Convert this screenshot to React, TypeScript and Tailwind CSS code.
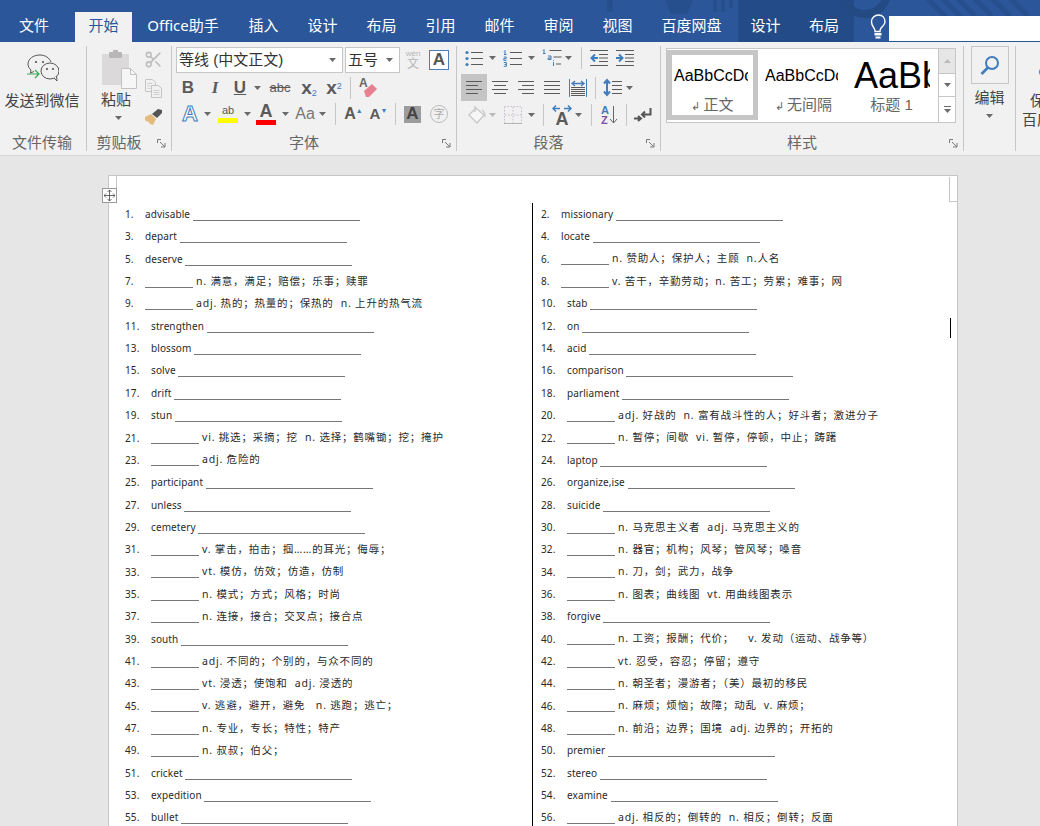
import React from 'react'
import { Scissors } from 'lucide-react'

const cjk = "font-['Noto_Sans','Noto_Sans_CJK_SC',sans-serif]"
const ui = "font-['Liberation_Sans','Noto_Sans_CJK_SC',sans-serif]"

type Row = { n: number; word?: string; def?: string }

const leftRows: Row[] = [
  { n: 1, word: 'advisable' },
  { n: 3, word: 'depart' },
  { n: 5, word: 'deserve' },
  { n: 7, def: 'n. 满意，满足；赔偿；乐事；赎罪' },
  { n: 9, def: 'adj. 热的；热量的；保热的  n. 上升的热气流' },
  { n: 11, word: 'strengthen' },
  { n: 13, word: 'blossom' },
  { n: 15, word: 'solve' },
  { n: 17, word: 'drift' },
  { n: 19, word: 'stun' },
  { n: 21, def: 'vi. 挑选；采摘；挖  n. 选择；鹤嘴锄；挖；掩护' },
  { n: 23, def: 'adj. 危险的' },
  { n: 25, word: 'participant' },
  { n: 27, word: 'unless' },
  { n: 29, word: 'cemetery' },
  { n: 31, def: 'v. 掌击，拍击；掴……的耳光；侮辱；' },
  { n: 33, def: 'vt. 模仿，仿效；仿造，仿制' },
  { n: 35, def: 'n. 模式；方式；风格；时尚' },
  { n: 37, def: 'n. 连接，接合；交叉点；接合点' },
  { n: 39, word: 'south' },
  { n: 41, def: 'adj. 不同的；个别的，与众不同的' },
  { n: 43, def: 'vt. 浸透；使饱和  adj. 浸透的' },
  { n: 45, def: 'v. 逃避，避开，避免   n. 逃跑；逃亡；' },
  { n: 47, def: 'n. 专业，专长；特性；特产' },
  { n: 49, def: 'n. 叔叔；伯父；' },
  { n: 51, word: 'cricket' },
  { n: 53, word: 'expedition' },
  { n: 55, word: 'bullet' },
]

const rightRows: Row[] = [
  { n: 2, word: 'missionary' },
  { n: 4, word: 'locate' },
  { n: 6, def: 'n. 赞助人；保护人；主顾  n.人名' },
  { n: 8, def: 'v. 苦干，辛勤劳动；n. 苦工；劳累；难事；网' },
  { n: 10, word: 'stab' },
  { n: 12, word: 'on' },
  { n: 14, word: 'acid' },
  { n: 16, word: 'comparison' },
  { n: 18, word: 'parliament' },
  { n: 20, def: 'adj. 好战的  n. 富有战斗性的人；好斗者；激进分子' },
  { n: 22, def: 'n. 暂停；间歇  vi. 暂停，停顿，中止；踌躇' },
  { n: 24, word: 'laptop' },
  { n: 26, word: 'organize,ise' },
  { n: 28, word: 'suicide' },
  { n: 30, def: 'n. 马克思主义者  adj. 马克思主义的' },
  { n: 32, def: 'n. 器官；机构；风琴；管风琴；嗓音' },
  { n: 34, def: 'n. 刀，剑；武力，战争' },
  { n: 36, def: 'n. 图表；曲线图  vt. 用曲线图表示' },
  { n: 38, word: 'forgive' },
  { n: 40, def: 'n. 工资；报酬；代价；    v. 发动（运动、战争等）' },
  { n: 42, def: 'vt. 忍受，容忍；停留；遵守' },
  { n: 44, def: 'n. 朝圣者；漫游者；（美）最初的移民' },
  { n: 46, def: 'n. 麻烦；烦恼；故障；动乱  v. 麻烦；' },
  { n: 48, def: 'n. 前沿；边界；国境  adj. 边界的；开拓的' },
  { n: 50, word: 'premier' },
  { n: 52, word: 'stereo' },
  { n: 54, word: 'examine' },
  { n: 56, def: 'adj. 相反的；倒转的  n. 相反；倒转；反面' },
]

const Caret = ({ className = '' }: { className?: string }) => (
  <svg width="7" height="4" viewBox="0 0 7 4" className={`shrink-0 ${className}`}>
    <path d="M0 0h7L3.5 4z" fill="#6a6a6a" />
  </svg>
)

const Launcher = () => (
  <svg width="9" height="9" viewBox="0 0 9 9" className="absolute right-[5px] bottom-[3px]">
    <path d="M.5 4V.5H4" fill="none" stroke="#777" />
    <path d="M3 3l4.500 4.500M8 4v4H4" fill="none" stroke="#777" />
  </svg>
)

const Sep = () => <div className="w-px h-[22px] bg-[#c6c6c6] shrink-0" />

const Group = ({
  width,
  label,
  launcher,
  children,
}: {
  width: string
  label?: string
  launcher?: boolean
  children: React.ReactNode
}) => (
  <div className={`${width} relative shrink-0 h-[105px] flex flex-col border-r border-[#c6c6c6]`}>
    <div className="flex-1 min-h-0">{children}</div>
    {label && (
      <div
        className={`h-[17px] leading-[17px] text-center text-[15px] text-[#666] whitespace-nowrap ${
          launcher ? 'pr-[20px]' : 'pr-[2px]'
        }`}
      >
        {label}
      </div>
    )}
    {launcher && <Launcher />}
  </div>
)

const ListIcon = ({ kind }: { kind: 'bullet' | 'number' }) => (
  <svg width="20" height="17" viewBox="0 0 20 17" className="shrink-0">
    {kind === 'bullet' && (
      <g fill="#3f7dbd">
        <circle cx="2" cy="2.500" r="1.600" />
        <circle cx="2" cy="8.500" r="1.600" />
        <circle cx="2" cy="14.500" r="1.600" />
      </g>
    )}
    {kind === 'number' && (
      <g fill="none" stroke="#3f7dbd" strokeWidth="1">
        <path d="M1 1.500l1-1v4M1 4.500h2.500" />
        <path d="M.8 7h2.400v1.600H.8v1.800h2.700" />
        <path d="M.8 12.500h2.600v3.800H.8M1.500 14.400h1.700" />
      </g>
    )}
    <path d={kind === 'bullet' ? 'M6 2.500h12M6 8.500h12M6 14.500h12' : 'M7 2.500h12M7 8.500h12M7 14.500h12'} stroke="#5a5a5a" />
  </svg>
)

const MultiIcon = () => (
  <svg width="21" height="18" viewBox="0 0 21 18" className="shrink-0">
    <g fill="none" stroke="#3f7dbd">
      <path d="M1 1.500l1-1v4M1 4.500h2.500" />
      <path d="M6 7h3v3.500H6V9h3" />
      <path d="M11.500 13v4M11.500 11v.8" />
    </g>
    <path d="M7.500 1.500h12M11.500 8h8M14 15h5" stroke="#5a5a5a" />
  </svg>
)

const IndentIcon = ({ out }: { out?: boolean }) => (
  <svg width="18" height="16" viewBox="0 0 18 16" className="shrink-0">
    <path d="M0 .5h18M9 4.500h9M9 8h9M9 11.500h9M0 15.500h18" stroke="#5a5a5a" />
    {out ? (
      <path d="M8 8H2M5 4.500L1.500 8 5 11.500" fill="none" stroke="#3f7dbd" strokeWidth="2" />
    ) : (
      <path d="M0 8h6M3 4.500L6.500 8 3 11.500" fill="none" stroke="#3f7dbd" strokeWidth="2" />
    )}
  </svg>
)

const AlignIcon = ({ lines }: { lines: string }) => (
  <svg width="16" height="13" viewBox="0 0 16 13">
    <path d={lines} stroke="#5a5a5a" />
  </svg>
)

const Distributed = () => (
  <svg width="18" height="18" viewBox="0 0 18 18" className="shrink-0">
    <path d="M.5 0v18M17.500 0v18" stroke="#3f7dbd" />
    <path d="M3 4.500h12M6 2L3 4.500 6 7M12 2l3 2.500L12 7" fill="none" stroke="#3f7dbd" strokeWidth="1.300" />
    <path d="M2 8.500h14M2 10.500h14M2 12.500h14M2 14.500h14M2 16.500h14" stroke="#5a5a5a" />
  </svg>
)

const LineSpacing = () => (
  <svg width="19" height="19" viewBox="0 0 19 19" className="shrink-0">
    <path d="M4 3v13M1 5.500L4 2l3 3.500M1 13.500L4 17l3-3.500" fill="none" stroke="#3f7dbd" strokeWidth="2" />
    <path d="M9 3.500h10M9 7.500h10M9 11.500h10M9 15.500h10" stroke="#5a5a5a" />
  </svg>
)

const Painter = () => (
  <svg width="19" height="17" viewBox="0 0 19 17">
    <path d="M1 9l6-3 5 5-3 6-3-1-2-3-1 1-2-2z" fill="#e4bb7d" />
    <path d="M8 6l6-5 4 1v3l-5 5z" fill="#555" />
  </svg>
)

const CopyIcon = () => (
  <svg width="18" height="19" viewBox="0 0 18 19">
    <path d="M.5.500h7l3 3v9H.5z" fill="#f1f1f1" stroke="#c4c4c4" />
    <path d="M6.500 6.500h7l3 3v9h-10z" fill="#f1f1f1" stroke="#c4c4c4" />
    <path d="M2.500 4.500h5M2.500 7h3M2.500 9.500h3M8.500 11.500h6M8.500 13.500h6M8.500 15.500h6" stroke="#cfcfcf" />
  </svg>
)

const PasteIcon = () => (
  <svg width="35" height="39" viewBox="0 0 35 39">
    <rect x="0" y="4" width="27" height="31" rx="1" fill="#dcd9da" />
    <rect x="7" y="2" width="13" height="6" rx="1" fill="#b9b6b7" />
    <rect x="11" y="0" width="5" height="3" fill="#b9b6b7" />
    <path d="M19.500 18.500h9l6 6v14h-15z" fill="#f7f6f6" stroke="#c4c1c2" />
    <path d="M28.500 18.500v6h6" fill="none" stroke="#c4c1c2" />
  </svg>
)

const WechatIcon = () => (
  <svg width="33" height="28" viewBox="0 0 33 28">
    <path d="M14 1C7 1 2 5 2 10c0 2.500 1.300 4.600 3 6l-.5 3 3.500-1.500" fill="none" stroke="#555" />
    <path d="M25 8C23.500 3.800 19 1 14 1" fill="none" stroke="#555" />
    <ellipse cx="24" cy="17" rx="9" ry="8" fill="#f1f1f1" stroke="#555" />
    <path d="M28 24l3 3-.5-5" fill="#f1f1f1" stroke="#555" />
    <circle cx="10" cy="8" r="1.100" fill="#555" />
    <circle cx="17" cy="8" r="1.100" fill="#555" />
    <circle cx="21" cy="15" r="1.100" fill="#555" />
    <circle cx="27" cy="15" r="1.100" fill="#555" />
    <path d="M1 20h12M9 16l4 4-4 4" fill="none" stroke="#3aa655" strokeWidth="1.200" />
  </svg>
)

const Eraser = () => (
  <svg width="18" height="22" viewBox="0 0 18 22">
    <path d="M5 14l8-7 5 5-8 8h-3z" fill="#e8808f" />
    <text x="0" y="10" fontSize="12" fontWeight="700" fill="#666" fontFamily="Liberation Sans">A</text>
  </svg>
)

const Bucket = () => (
  <svg width="20" height="20" viewBox="0 0 20 20" className="shrink-0">
    <path d="M9 3l8 7-7 8-8-8z" fill="#f7f7f7" stroke="#c9c9c9" strokeWidth="1.400" />
    <path d="M8 1v6M15 5c3 2 3 4 3 7" fill="none" stroke="#c9c9c9" strokeWidth="1.400" />
  </svg>
)

const Borders = () => (
  <svg width="18" height="18" viewBox="0 0 18 18" className="shrink-0">
    <rect x=".5" y=".5" width="17" height="17" fill="none" stroke="#c9b9cf" strokeDasharray="1.500 1.500" />
    <path d="M9 1v16M1 9h16" stroke="#c9b9cf" strokeDasharray="1.500 1.500" />
    <path d="M0 17.500h18" stroke="#b4b4b4" />
  </svg>
)

const Pilcrow = () => (
  <svg width="18" height="16" viewBox="0 0 18 16" className="shrink-0">
    <path d="M16.500 1v6.500H8M11 4.500L8 7.500l3 3" fill="none" stroke="#555" strokeWidth="2" />
    <path d="M0 11.500h6M4 9l3 2.500L4 14" fill="none" stroke="#555" strokeWidth="2" />
  </svg>
)

const Bulb = () => (
  <svg width="16" height="28" viewBox="0 0 16 28">
    <path d="M8 2C4 2 1 5 1 9c0 3 2 5 3 7 .4.900.500 1.500.500 2.500h5c0-1 .100-1.600.500-2.500 1-2 4.500-4 4.500-7 0-4-2.500-7-6.500-7z" fill="none" stroke="#fff" strokeWidth="1.400" transform="translate(.5 0)" />
    <rect x="4.500" y="20" width="7" height="2.500" fill="#fff" />
    <rect x="5.500" y="23.500" width="5" height="2" fill="#fff" />
  </svg>
)

const Search = () => (
  <svg width="20" height="20" viewBox="0 0 20 20">
    <circle cx="12" cy="8" r="6" fill="none" stroke="#3f7dbd" strokeWidth="2" />
    <path d="M8 12.500L1.500 19" stroke="#3f7dbd" strokeWidth="2.600" />
  </svg>
)

const Tab = ({ label, active, width }: { label: string; active?: boolean; width: string }) => (
  <div
    className={`${width} h-[30px] shrink-0 flex items-center justify-center text-[15px] pb-[4px] ${cjk} ${
      active ? 'bg-[#f1f1f1] text-[#2b579a]' : 'text-white'
    }`}
  >
    {label}
  </div>
)

const TitleBar = () => (
  <div className="relative h-[42px] bg-[#2b579a] flex items-end overflow-hidden">
    <svg width="1040" height="42" viewBox="0 0 1040 42" className="absolute left-0 top-0">
      <g fill="#264f8d">
        <rect x="607" y="0" width="6" height="12" />
        <path d="M665 0h28l-6 14h-16z" />
      </g>
      <path d="M715 0v12M723 0v12M731 0v8" fill="none" stroke="#264f8d" strokeWidth="4" />
      <g stroke="#264f8d" strokeWidth="5">
        <path d="M925 -4l22 22M940 -4l24 24M955 -4l20 20M972 -4l20 20M990 -4l20 20M1008 -4l20 20" />
      </g>
    </svg>
    <div className="absolute left-[738px] top-0 w-[116px] h-[42px] bg-[#1c3f74]/50" />
    <svg width="60" height="30" viewBox="0 0 60 30" className="absolute left-[835px] top-0">
      <circle cx="30" cy="-8" r="22" fill="none" stroke="#234a82" strokeWidth="8" />
    </svg>
    <div className="relative flex items-end">
      <Tab label="文件" width="w-[68px]" />
      <div className="w-[7px]" />
      <Tab label="开始" active width="w-[57px]" />
      <Tab label="Office助手" width="w-[102px]" />
      <Tab label="插入" width="w-[59px]" />
      <Tab label="设计" width="w-[59px]" />
      <Tab label="布局" width="w-[59px]" />
      <Tab label="引用" width="w-[59px]" />
      <Tab label="邮件" width="w-[59px]" />
      <Tab label="审阅" width="w-[59px]" />
      <Tab label="视图" width="w-[59px]" />
      <Tab label="百度网盘" width="w-[89px]" />
      <Tab label="设计" width="w-[59px]" />
      <Tab label="布局" width="w-[58px]" />
      <div className="w-[15px]" />
      <div className="h-[30px] w-[20px] flex items-start justify-center pt-[1px]">
        <Bulb />
      </div>
      <div className="w-[15px]" />
    </div>
    <div className="absolute left-[889px] top-[16px] right-0 h-[25px] bg-white" />
  </div>
)

const StyleCard = ({
  sample,
  label,
  selected,
}: {
  sample: React.ReactNode
  label: React.ReactNode
  selected?: boolean
}) => (
  <div
    className={`w-[91px] h-[70px] shrink-0 flex flex-col items-center overflow-hidden border-[5px] ${
      selected ? 'border-[#c6c6c6]' : 'border-white'
    }`}
  >
    <div className="h-[41px] w-full flex items-center overflow-hidden whitespace-nowrap">{sample}</div>
    <div className="text-[15px] text-[#666] leading-[18px] whitespace-nowrap">{label}</div>
  </div>
)

const Ribbon = () => (
  <div className={`h-[114px] bg-[#f1f1f1] border-b border-[#d6d6d6] flex pt-[4px] overflow-hidden ${ui}`}>
    <Group width="w-[87px]" label="文件传输">
      <div className="flex flex-col items-center pt-[8px] pr-[2px]">
        <WechatIcon />
        <div className="text-[15px] text-[#444] leading-[20px] mt-[9px] whitespace-nowrap">发送到微信</div>
      </div>
    </Group>

    <Group width="w-[85px]" label="剪贴板" launcher>
      <div className="flex pl-[14px]">
        <div className="w-[37px] flex flex-col items-center pt-[4px]">
          <PasteIcon />
          <div className="text-[15px] text-[#444] leading-[20px] mt-[1px] mr-[7px]">粘贴</div>
          <Caret className="mt-[6px] mr-[3px]" />
        </div>
        <div className="flex flex-col items-center gap-[10px] pt-[4px] ml-[6px]">
          <Scissors size={19} color="#bdbdbd" />
          <CopyIcon />
          <Painter />
        </div>
      </div>
    </Group>

    <Group width="w-[285px]" label="字体" launcher>
      <div className="pl-[4px] pt-[1px]">
        <div className="flex items-center h-[26px]">
          <div className="w-[167px] h-[26px] bg-white border border-[#c6c6c6] flex items-center justify-between pl-[2px] pr-[6px] text-[15px] text-[#333]">
            等线 (中文正文)
            <Caret />
          </div>
          <div className="w-[55px] h-[26px] ml-[2px] bg-white border border-[#c6c6c6] flex items-center justify-between pl-[2px] pr-[6px] text-[15px] text-[#333]">
            五号
            <Caret />
          </div>
          <div className="w-[24px] ml-[1px] flex flex-col items-center text-[#b5b5b5] leading-none">
            <span className="text-[8px]">wén</span>
            <span className="text-[12px]">文</span>
          </div>
          <div className="w-[20px] h-[20px] ml-[4px] border border-[#4a7fb8] flex items-center justify-center text-[17px] font-bold text-[#555] bg-white">
            A
          </div>
        </div>
        <div className="flex items-center h-[26px] mt-[2px] text-[#5a5a5a] font-bold">
          <div className="w-[24px] text-[17px] text-center">B</div>
          <div className="w-[30px] text-[17px] text-center italic font-['Liberation_Serif',serif]">I</div>
          <div className="w-[20px] text-[17px] text-center underline">U</div>
          <Caret className="ml-[4px]" />
          <div className="w-[38px] text-[13px] text-center font-normal line-through">abc</div>
          <div className="w-[20px] text-[19px] text-center">
            x<sub className="text-[9px] text-[#3f7dbd] font-normal">2</sub>
          </div>
          <div className="w-[30px] text-[19px] text-center">
            x<sup className="text-[9px] text-[#3f7dbd] font-normal">2</sup>
          </div>
          <div className="w-px" />
          <Sep />
          <div className="w-[34px] flex justify-center">
            <Eraser />
          </div>
        </div>
        <div className="flex items-center h-[26px] text-[#5a5a5a]">
          <div className="w-[26px] ml-[1px] text-center text-[22px] leading-[24px] font-bold text-white [-webkit-text-stroke:1px_#3f7dbd]">A</div>
          <Caret className="ml-[1px]" />
          <div className="w-[30px] ml-[2px] flex flex-col items-center leading-none">
            <span className="text-[11px] leading-[11px]">ab</span>
            <span className="w-[20px] h-[5px] bg-[#ffff00] mt-[2px]" />
          </div>
          <Caret className="ml-[1px]" />
          <div className="w-[30px] flex flex-col items-center leading-none">
            <span className="text-[18px] leading-[15px] font-bold">A</span>
            <span className="w-[20px] h-[5px] bg-[#ff0000] mt-[1px]" />
          </div>
          <Caret className="ml-[1px]" />
          <div className="w-[24px] ml-[4px] text-center text-[16px] text-[#777]">Aa</div>
          <Caret className="ml-[2px]" />
          <div className="w-[9px]" />
          <Sep />
          <div className="w-[25px] ml-[5px] text-center text-[16px] font-bold">
            A<span className="text-[7px] text-[#3f7dbd] align-super">▲</span>
          </div>
          <div className="w-[25px] text-center text-[15px] font-bold">
            A<span className="text-[7px] text-[#3f7dbd] align-super">▼</span>
          </div>
          <div className="w-[4px]" />
          <Sep />
          <div className="w-[17px] h-[17px] ml-[8px] bg-[#9c9c9c] flex items-center justify-center text-[17px] font-bold text-[#444]">A</div>
          <div className="w-[18px] h-[18px] ml-[9px] rounded-full border border-[#bbb] flex items-center justify-center text-[11px] text-[#aaa]">字</div>
        </div>
      </div>
    </Group>

    <Group width="w-[204px]" label="段落" launcher>
      <div className="pl-[4px]">
        <div className="flex items-center h-[24px] pl-[4px]">
          <ListIcon kind="bullet" />
          <Caret className="ml-[4px]" />
          <div className="w-[7px]" />
          <ListIcon kind="number" />
          <Caret className="ml-[5px]" />
          <div className="w-[7px]" />
          <MultiIcon />
          <Caret className="ml-[2px]" />
          <div className="w-[9px]" />
          <Sep />
          <div className="w-[8px]" />
          <IndentIcon out />
          <div className="w-[8px]" />
          <IndentIcon />
        </div>
        <div className="flex items-center h-[27px] mt-[4px]">
          <div className="w-[26px] h-[27px] bg-[#c5c5c5] flex items-center justify-center">
            <AlignIcon lines="M0 .5h16M0 4.500h12M0 8.500h16M0 12.500h12" />
          </div>
          <div className="w-[26px] flex justify-center">
            <AlignIcon lines="M0 .5h16M2 4.500h12M0 8.500h16M2 12.500h12" />
          </div>
          <div className="w-[26px] flex justify-center">
            <AlignIcon lines="M0 .5h16M4 4.500h12M0 8.500h16M4 12.500h12" />
          </div>
          <div className="w-[26px] flex justify-center">
            <AlignIcon lines="M0 .5h16M0 4.500h16M0 8.500h16M0 12.500h16" />
          </div>
          <div className="w-[4px]" />
          <Distributed />
          <div className="w-[8px]" />
          <Sep />
          <div className="w-[7px]" />
          <LineSpacing />
          <Caret className="ml-[4px]" />
        </div>
        <div className="flex items-center h-[24px] mt-[2px]">
          <div className="w-[6px]" />
          <Bucket />
          <Caret className="ml-[2px] opacity-40" />
          <div className="w-[8px]" />
          <Borders />
          <Caret className="ml-[6px]" />
          <div className="w-[8px]" />
          <Sep />
          <div className="w-[20px] ml-[8px] flex flex-col items-center">
            <svg width="20" height="7" viewBox="0 0 20 7">
              <path d="M1 3.500h7M4 .5L1 3.500l3 3M12 3.500h7M16 .5l3 3-3 3" fill="none" stroke="#3f7dbd" strokeWidth="1.500" />
            </svg>
            <span className="text-[18px] leading-[14px] font-bold text-[#5a5a5a]">A</span>
          </div>
          <Caret className="ml-[3px]" />
          <div className="w-[9px]" />
          <Sep />
          <div className="w-[9px]" />
          <div className="w-[18px] flex items-center">
            <div className="flex flex-col text-[11px] leading-[10px] font-bold">
              <span className="text-[#3f7dbd]">A</span>
              <span className="text-[#7f4fa8]">Z</span>
            </div>
            <svg width="9" height="20" viewBox="0 0 9 20">
              <path d="M4.500 1v17M1 14l3.500 4 3.500-4" fill="none" stroke="#666" />
            </svg>
          </div>
          <div className="w-[7px]" />
          <Sep />
          <div className="w-[7px]" />
          <Pilcrow />
        </div>
      </div>
    </Group>

    <Group width="w-[303px]" label="样式" launcher>
      <div className="ml-[5px] mt-[2px] w-[290px] h-[75px] flex border border-[#c6c6c6] bg-white">
        <div className="flex py-[1px] w-[271px] overflow-hidden">
          <StyleCard
            selected
            sample={<span className="text-[16px] text-black ml-[2px] w-[74px] overflow-hidden">AaBbCcDc</span>}
            label={
              <>
                <span className="text-[11px]">↲ </span>正文
              </>
            }
          />
          <StyleCard
            sample={<span className="text-[16px] text-black ml-[2px] w-[73px] overflow-hidden">AaBbCcDc</span>}
            label={
              <>
                <span className="text-[11px]">↲ </span>无间隔
              </>
            }
          />
          <StyleCard
            sample={<span className="text-[36px] text-black w-[76px] overflow-hidden">AaBbCcDc</span>}
            label={<span className="pr-[6px]">标题 1</span>}
          />
        </div>
        <div className="w-[17px] ml-auto flex flex-col border-l border-[#c6c6c6]">
          <div className="h-[25px] bg-[#e6e6e6] border-b border-[#c6c6c6] flex items-center justify-center">
            <svg width="7" height="4" viewBox="0 0 7 4">
              <path d="M0 4h7L3.500 0z" fill="#bbb" />
            </svg>
          </div>
          <div className="h-[23px] border-b border-[#c6c6c6] flex items-center justify-center">
            <Caret />
          </div>
          <div className="flex-1 flex flex-col items-center justify-center gap-[2px]">
            <div className="w-[7px] h-px bg-[#6a6a6a]" />
            <Caret />
          </div>
        </div>
      </div>
    </Group>

    <Group width="w-[52px]">
      <div className="flex flex-col items-center">
        <div className="w-[38px] h-[38px] border border-[#c6c6c6] flex items-center justify-center">
          <Search />
        </div>
        <div className="text-[15px] text-[#444] leading-[20px] mt-[4px]">编辑</div>
        <Caret className="mt-[6px]" />
      </div>
    </Group>

    <div className="relative w-[60px] shrink-0 pl-[6px] pt-[45px] text-[15px] leading-[19px] text-[#444] whitespace-nowrap">
      <svg width="12" height="12" viewBox="0 0 12 12" className="absolute left-[22px] top-[20px]">
        <circle cx="6" cy="6" r="4" fill="none" stroke="#3f7dbd" strokeWidth="2" />
      </svg>
      <div className="pl-[8px]">保存到</div>
      <div>百度网盘</div>
      <div className="pl-[21px] text-[#666] mt-[5px] leading-[17px]">保存</div>
    </div>
  </div>
)

const DocRow = ({ row }: { row: Row }) => (
  <div className="h-[22.35px] flex items-center text-[10px] tracking-[0.1px] text-[#2a2a2a] whitespace-pre">
    <span className={row.n < 10 ? 'w-[20px] shrink-0' : 'w-[26px] shrink-0'}>{row.n}.</span>
    {row.word ? (
      <span>
        {row.word}{' '}
        <span className="inline-block w-[167px] h-px bg-[#777] -mb-[3px]" />
      </span>
    ) : (
      <span>
        <span className="inline-block w-[48px] h-px bg-[#777] -mb-[3px] mr-[3px]" />
        <span className="text-[10.5px] tracking-[0.8px]">{row.def}</span>
      </span>
    )}
  </div>
)

const Page = () => (
  <div className={`relative w-[850px] h-[700px] bg-white border border-[#c6c6c6] pt-[27.4px] ${cjk}`}>
    {/* table handle */}
    <div className="absolute left-[-7px] top-[12px] w-[15px] h-[15px] bg-white border border-[#9a9a9a] flex items-center justify-center">
      <svg width="11" height="11" viewBox="0 0 11 11">
        <path d="M5.500 0v11M0 5.500h11M3.500 2l2-2 2 2M3.500 9l2 2 2-2M2 3.500l-2 2 2 2M9 3.500l2 2-2 2" fill="none" stroke="#444" strokeWidth=".8" />
      </svg>
    </div>
    <div className="absolute left-[7px] top-0 w-px h-[12px] bg-[#c6c6c6]" />
    {/* page corner mark */}
    <div className="absolute right-0 top-[1px] w-[8px] h-[25px] border-l border-b border-[#c6c6c6]" />
    {/* text cursor */}
    <div className="absolute left-[841px] top-[142px] w-px h-[20px] bg-black" />
    <div className="flex">
      <div className="w-[424px] pl-[16px] shrink-0 border-r border-black">
        {leftRows.map((row) => (
          <DocRow key={row.n} row={row} />
        ))}
      </div>
      <div className="pl-[8px]">
        {rightRows.map((row) => (
          <DocRow key={row.n} row={row} />
        ))}
      </div>
    </div>
  </div>
)

export default function App() {
  return (
    <div className={`w-[1040px] h-[826px] overflow-hidden bg-[#e6e6e6] ${ui}`}>
      <TitleBar />
      <Ribbon />
      <div className="pl-[108px] pt-[19px]">
        <Page />
      </div>
    </div>
  )
}
